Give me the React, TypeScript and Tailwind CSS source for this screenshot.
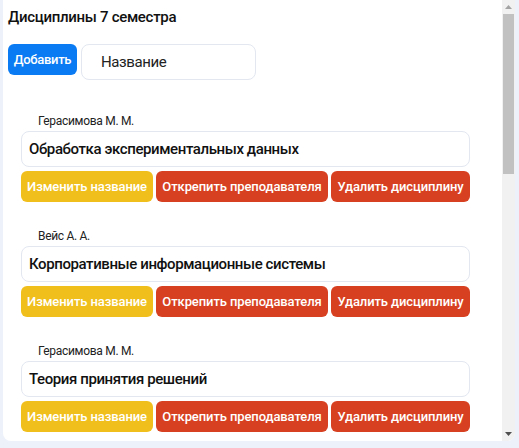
import React from "react";

const items = [
  { teacher: "Герасимова М. М.", name: "Обработка экспериментальных данных" },
  { teacher: "Вейс А. А.", name: "Корпоративные информационные системы" },
  { teacher: "Герасимова М. М.", name: "Теория принятия решений" },
];

function Btn({ w, color, children }: { w: string; color: string; children: React.ReactNode }) {
  return (
    <button
      className={`${w} ${color} h-[31px] rounded-[6px] text-white text-[13px] font-medium tracking-[-0.1px] whitespace-nowrap flex items-center justify-center`}
    >
      {children}
    </button>
  );
}

export default function App() {
  return (
    <div
      className="w-[519px] h-[448px] bg-[#edf2fa] overflow-hidden"
      style={{ fontFamily: 'Roboto, "Open Sans", sans-serif' }}
    >
      <div className="ml-[3px] w-[512px] h-[441px] bg-white rounded-b-lg overflow-hidden flex">
        <div className="w-[499px] h-full overflow-hidden">
          <div className="pl-[5px] pt-[5px]">
            <div className="text-[15px] leading-[24px] font-medium tracking-[-0.3px] text-[#111]">
              Дисциплины 7 семестра
            </div>
            <div className="flex items-start gap-[4px] mt-[15px]">
              <button className="w-[69px] h-[31px] rounded-[6px] bg-[#0a7bf2] text-white text-[13px] font-medium tracking-[-0.3px] whitespace-nowrap flex items-center justify-center">
                Добавить
              </button>
              <div className="w-[175px] h-[36px] rounded-[8px] border border-[#e2e7f0] flex items-center pl-[19px] text-[15px] tracking-[-0.4px] text-[#222]">
                Название
              </div>
            </div>
            <div className="mt-[33px] pl-[13px] flex flex-col gap-[26px]">
              {items.map((it, i) => (
                <div key={i} className="flex flex-col">
                  <div className="h-[18px] pl-[17px] text-[12px] leading-[16px] tracking-[-0.3px] text-[#222]">
                    {it.teacher}
                  </div>
                  <div className="w-[449px] h-[36px] rounded-[8px] border border-[#e2e7f0] flex items-center pl-[7px] text-[15px] font-medium tracking-[-0.4px] text-[#111]">
                    {it.name}
                  </div>
                  <div className="flex gap-[3px] mt-[4px]">
                    <Btn w="w-[132px]" color="bg-[#f0bf1c]">Изменить название</Btn>
                    <Btn w="w-[172px]" color="bg-[#d74121]">Открепить преподавателя</Btn>
                    <Btn w="w-[139px]" color="bg-[#d74121]">Удалить дисциплину</Btn>
                  </div>
                </div>
              ))}
            </div>
          </div>
        </div>
        <div className="w-[13px] h-full bg-[#f1f1f1] flex flex-col items-center">
          <div className="h-[14px] w-full flex items-center justify-center">
            <svg width="7" height="4" viewBox="0 0 7 4">
              <polygon points="0,4 7,4 3.5,0" fill="#a3a3a3" />
            </svg>
          </div>
          <div className="w-[11px] h-[160px] bg-[#c1c1c1]" />
          <div className="flex-1" />
          <div className="h-[14px] w-full flex items-center justify-center">
            <svg width="7" height="4" viewBox="0 0 7 4">
              <polygon points="0,0 7,0 3.5,4" fill="#505050" />
            </svg>
          </div>
        </div>
      </div>
    </div>
  );
}
